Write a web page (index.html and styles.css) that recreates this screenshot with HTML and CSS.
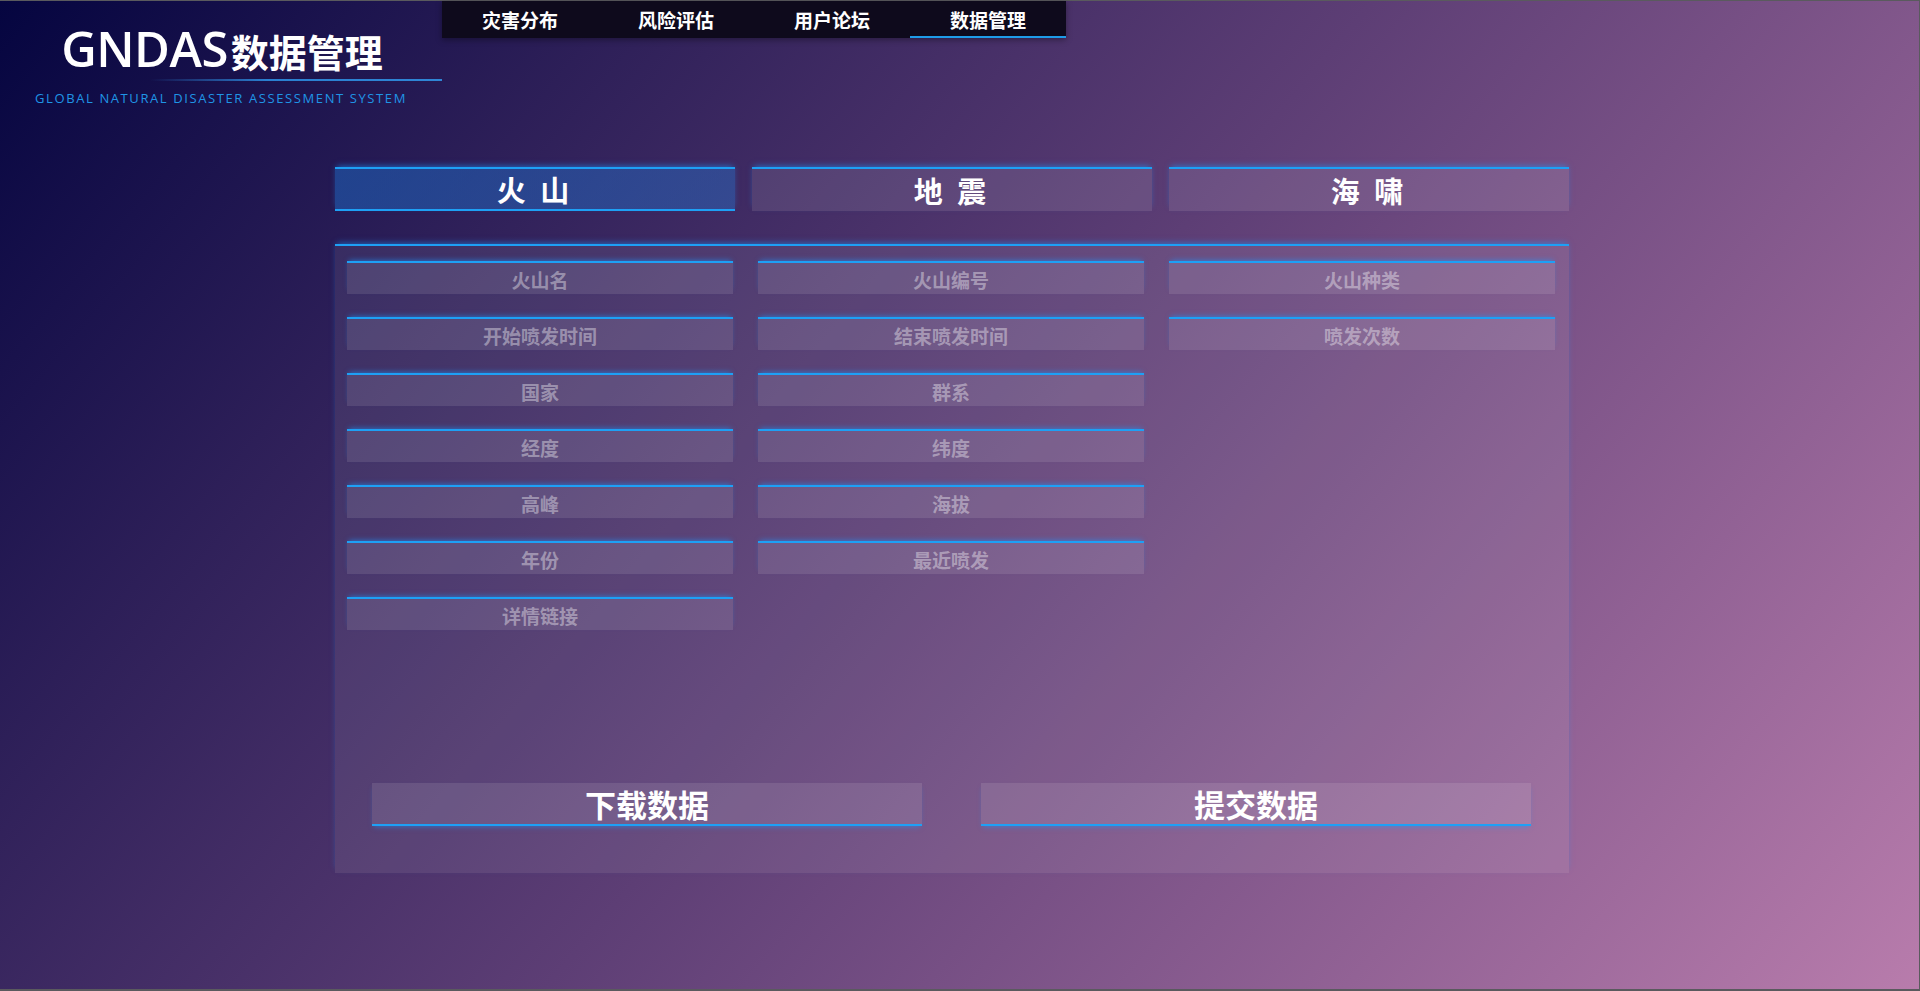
FILE: index.html
```html
<!DOCTYPE html>
<html lang="zh-CN">
<head>
<meta charset="utf-8">
<title>GNDAS 数据管理</title>
<link rel="stylesheet" href="styles.css">
</head>
<body>
<div class="page">
  <header class="header">
    <div class="brand">
      <div class="brand-title"><span class="brand-en">GNDAS</span><span class="brand-cn">数据管理</span></div>
      <div class="brand-line"></div>
      <div class="brand-sub">GLOBAL NATURAL DISASTER ASSESSMENT SYSTEM</div>
    </div>
    <nav class="nav">
      <a class="nav-item">灾害分布</a>
      <a class="nav-item">风险评估</a>
      <a class="nav-item">用户论坛</a>
      <a class="nav-item active">数据管理</a>
    </nav>
  </header>

  <main class="content">
    <div class="tabs">
      <div class="tab active">火 山</div>
      <div class="tab">地 震</div>
      <div class="tab">海 啸</div>
    </div>

    <section class="panel">
      <div class="fields">
        <div class="col">
          <div class="field">火山名</div>
          <div class="field">开始喷发时间</div>
          <div class="field">国家</div>
          <div class="field">经度</div>
          <div class="field">高峰</div>
          <div class="field">年份</div>
          <div class="field">详情链接</div>
        </div>
        <div class="col">
          <div class="field">火山编号</div>
          <div class="field">结束喷发时间</div>
          <div class="field">群系</div>
          <div class="field">纬度</div>
          <div class="field">海拔</div>
          <div class="field">最近喷发</div>
        </div>
        <div class="col">
          <div class="field">火山种类</div>
          <div class="field">喷发次数</div>
        </div>
      </div>
      <div class="actions">
        <button class="btn">下载数据</button>
        <button class="btn">提交数据</button>
      </div>
    </section>
  </main>
</div>
</body>
</html>
```
FILE: styles.css
```css
html, body {
  margin: 0;
  padding: 0;
}
body {
  width: 1920px;
  height: 991px;
  overflow: hidden;
  font-family: "Noto Sans CJK SC", "Noto Sans", sans-serif;
}
.page {
  box-sizing: border-box;
  width: 1920px;
  height: 991px;
  border-top: 1px solid #5a5a5e;
  border-bottom: 2px solid #5a5a5e;
  border-right: 1px solid #5a5a5e;
  background: linear-gradient(130deg, #050540 0%, #5d3e75 50%, #b87cac 100%);
}

/* header */
.header {
  display: flex;
  align-items: flex-start;
}
.brand {
  width: 442px;
  display: flex;
  flex-direction: column;
  align-items: center;
}
.brand-title {
  margin-top: 16px;
  margin-left: 2px;
  height: 62px;
  display: flex;
  align-items: baseline;
  color: #fff;
}
.brand-en {
  font-family: "Open Sans", "Noto Sans", sans-serif;
  font-weight: 600;
  font-size: 49px;
  letter-spacing: -0.5px;
  line-height: 62px;
}
.brand-cn {
  font-weight: 700;
  font-size: 38px;
  margin-left: 3px;
  line-height: 62px;
}
.brand-line {
  align-self: stretch;
  margin-left: 150px;
  height: 2px;
  background: linear-gradient(90deg, rgba(42, 128, 208, 0), #2a7fd0 40%, #2f86d6);
}
.brand-sub {
  margin-top: 9px;
  font-family: "Open Sans", "Noto Sans", sans-serif;
  font-size: 13px;
  letter-spacing: 1.6px;
  color: #1f95e6;
  line-height: 16px;
}

.nav {
  width: 624px;
  height: 37px;
  display: flex;
  background: #0e0a1c;
  box-shadow: 0 2px 6px rgba(0, 0, 0, 0.35);
}
.nav-item {
  flex: 1;
  box-sizing: border-box;
  height: 37px;
  display: flex;
  align-items: center;
  justify-content: center;
  color: #fff;
  font-weight: 700;
  font-size: 19px;
  border-bottom: 2px solid transparent;
  padding-top: 1px;
}
.nav-item.active {
  border-bottom-color: #1e9be8;
}

/* content */
.content {
  margin-left: 335px;
  width: 1234px;
  margin-top: 61px;
}
.tabs {
  display: grid;
  grid-template-columns: repeat(3, 1fr);
  column-gap: 17px;
}
.tab {
  box-sizing: border-box;
  height: 44px;
  border-top: 2px solid #1ea0f5;
  background: rgba(255, 255, 255, 0.1);
  color: #fff;
  font-weight: 700;
  font-size: 29px;
  letter-spacing: 4px;
  text-align: center;
  line-height: 42px;
  box-shadow: 0 -3px 6px -2px rgba(30, 150, 255, 0.6);
}
.tab.active {
  border-bottom: 2px solid #1ea0f5;
  background: linear-gradient(90deg, rgba(30, 100, 190, 0.55), rgba(40, 110, 200, 0.45));
  line-height: 40px;
}

.panel {
  box-sizing: border-box;
  margin-top: 33px;
  height: 629px;
  border-top: 2px solid #1ea0f5;
  background: rgba(255, 255, 255, 0.08);
  box-shadow: 0 -3px 6px -2px rgba(30, 150, 255, 0.55);
  padding: 15px 14px 0 12px;
  display: flex;
  flex-direction: column;
}
.fields {
  display: flex;
  gap: 25px;
  height: 370px;
}
.col {
  width: 386px;
  display: flex;
  flex-direction: column;
  gap: 23px;
}
.field {
  box-sizing: border-box;
  height: 33px;
  border-top: 2px solid #1ea0f5;
  box-shadow: 0 -3px 5px -2px rgba(30, 150, 255, 0.55);
  background: rgba(255, 255, 255, 0.1);
  color: rgba(255, 255, 255, 0.4);
  font-weight: 700;
  font-size: 19px;
  line-height: 31px;
  padding-top: 1px;
  text-align: center;
}

.actions {
  margin-top: 152px;
  display: flex;
  justify-content: space-between;
  padding: 0 24px 0 25px;
}
.btn {
  box-sizing: border-box;
  width: 550px;
  height: 43px;
  border: none;
  border-bottom: 2px solid #1ea0f5;
  background: rgba(255, 255, 255, 0.1);
  box-shadow: 0 3px 5px -2px rgba(30, 150, 255, 0.5);
  color: #fff;
  font-family: "Noto Sans CJK SC", "Noto Sans", sans-serif;
  font-weight: 700;
  font-size: 31px;
  line-height: 41px;
  padding: 0;
  cursor: pointer;
}
```
